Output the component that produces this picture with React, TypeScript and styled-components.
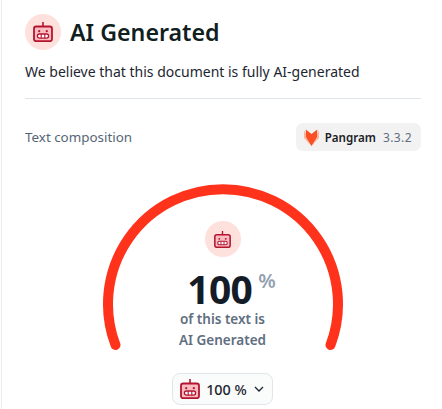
import styled, { createGlobalStyle } from "styled-components";

const GlobalStyle = createGlobalStyle`
    html, body {
        margin: 0;
        padding: 0;
        background: #ffffff;
    }
    body {
        font-family: "Noto Sans", "Open Sans", sans-serif;
    }
`;

const Panel = styled.div`
    box-sizing: border-box;
    width: 441px;
    height: 409px;
    overflow: hidden;
    padding: 14px 21px 0 23px;
    border-left: 1px solid #e8ecf1;
    margin-left: 1px;
    display: flex;
    flex-direction: column;
`;

const TitleRow = styled.div`
    display: flex;
    align-items: center;
    gap: 9px;
    height: 36px;
`;

const IconCircle = styled.div`
    width: 36px;
    height: 36px;
    border-radius: 50%;
    background: #fee0dc;
    display: flex;
    align-items: center;
    justify-content: center;
`;

const Title = styled.h1`
    margin: 0;
    font-size: 23.2px;
    line-height: 36px;
    font-weight: 600;
    color: #10201e;
`;

const Subtitle = styled.p`
    margin: 10px 0 0;
    font-size: 14px;
    line-height: 24px;
    color: #1c2630;
`;

const Divider = styled.hr`
    border: 0;
    border-top: 1px solid #e0e5ea;
    margin: 14px 0 0;
`;

const CompositionRow = styled.div`
    display: flex;
    align-items: center;
    justify-content: space-between;
    margin-top: 24px;
    height: 28px;
`;

const SectionLabel = styled.span`
    font-size: 13.4px;
    color: #566576;
`;

const VersionChip = styled.div`
    display: flex;
    align-items: center;
    gap: 6px;
    height: 28px;
    padding: 0 9px 0 8px;
    border-radius: 7px;
    background: #f2f2f2;
    font-size: 11.6px;
`;

const ChipName = styled.span`
    font-weight: 600;
    color: #1a2026;
`;

const ChipVersion = styled.span`
    margin-left: 1px;
    font-size: 12px;
    color: #5f6e80;
    letter-spacing: 0.4px;
`;

const Gauge = styled.div`
    position: relative;
    width: 242px;
    margin: 33px 0 0 76.5px;
    display: flex;
    flex-direction: column;
    align-items: center;
    padding-top: 37px;
`;

const GaugeArc = styled.svg`
    position: absolute;
    top: 0;
    left: 0;
`;

const Reading = styled.div`
    display: flex;
    align-items: flex-start;
    margin-top: 12px;
    padding-left: 18px;
    height: 40px;
`;

const BigNumber = styled.span`
    font-size: 39px;
    line-height: 40px;
    font-weight: 700;
    letter-spacing: -0.6px;
    color: #141c28;
`;

const Unit = styled.span`
    font-size: 20px;
    line-height: 24px;
    font-weight: 600;
    color: #94a0b0;
    margin-left: 6px;
`;

const Caption = styled.div`
    font-size: 13.5px;
    line-height: 21px;
    font-weight: 600;
    color: #5f6e80;
    text-align: center;
`;

const ScoreButton = styled.button`
    display: flex;
    align-items: center;
    gap: 6px;
    height: 32px;
    margin-top: 22px;
    padding: 0 7px;
    border: 1px solid #e2e6ea;
    border-radius: 8px;
    background: #fafbfb;
    font-family: inherit;
    font-size: 14.4px;
    font-weight: 500;
    color: #1c2630;
`;

const Robot = ({ size }: { size: number }) => (
    <svg width={size} height={size} viewBox="0 0 20 20">
        <path d="M10 0v4.5" stroke="#b4142e" strokeWidth="1.6" />
        <rect x="1" y="4.5" width="18" height="14.7" rx="2.2" fill="#f9bcc0" stroke="#b4142e" strokeWidth="1.8" />
        <circle cx="6.2" cy="9.2" r="1.1" fill="#b4142e" />
        <circle cx="13.8" cy="9.2" r="1.1" fill="#b4142e" />
        <rect x="4.4" y="12" width="11.2" height="4.2" rx="2.1" fill="#fff" stroke="#b4142e" strokeWidth="1.3" />
        <path d="M8.2 12v4.2M11.8 12v4.2" stroke="#b4142e" strokeWidth="1.1" />
    </svg>
);

const FoxLogo = () => (
    <svg width="15" height="17" viewBox="0 0 15 17">
        <path d="M0 1 7.5 17 15 1V9L7.5 17 0 9Z" fill="#fcb79c" />
        <path d="M1.8 0.5 7.5 5 13.2 0.5 13 8 7.5 17 2 8Z" fill="#fa4f24" />
    </svg>
);

const App = () => (
    <Panel>
        <GlobalStyle />
        <TitleRow>
            <IconCircle>
                <Robot size={20} />
            </IconCircle>
            <Title>AI Generated</Title>
        </TitleRow>
        <Subtitle>We believe that this document is fully AI-generated</Subtitle>
        <Divider />
        <CompositionRow>
            <SectionLabel>Text composition</SectionLabel>
            <VersionChip>
                <FoxLogo />
                <ChipName>Pangram</ChipName>
                <ChipVersion>3.3.2</ChipVersion>
            </VersionChip>
        </CompositionRow>
        <Gauge>
            <GaugeArc width="242" height="170" viewBox="0 0 242 170">
                <path
                    d="M13.5 161 A115 115 0 1 1 228.5 161"
                    fill="none"
                    stroke="#ff331c"
                    strokeWidth="10"
                    strokeLinecap="round"
                />
            </GaugeArc>
            <IconCircle>
                <Robot size={17} />
            </IconCircle>
            <Reading>
                <BigNumber>100</BigNumber>
                <Unit>%</Unit>
            </Reading>
            <Caption>of this text is</Caption>
            <Caption>AI Generated</Caption>
            <ScoreButton>
                <Robot size={20} />
                100 %
                <svg width="12" height="12" viewBox="0 0 12 12">
                    <path d="M2 4l4 4 4-4" fill="none" stroke="#1c2630" strokeWidth="1.3" />
                </svg>
            </ScoreButton>
        </Gauge>
    </Panel>
);

export default App;
